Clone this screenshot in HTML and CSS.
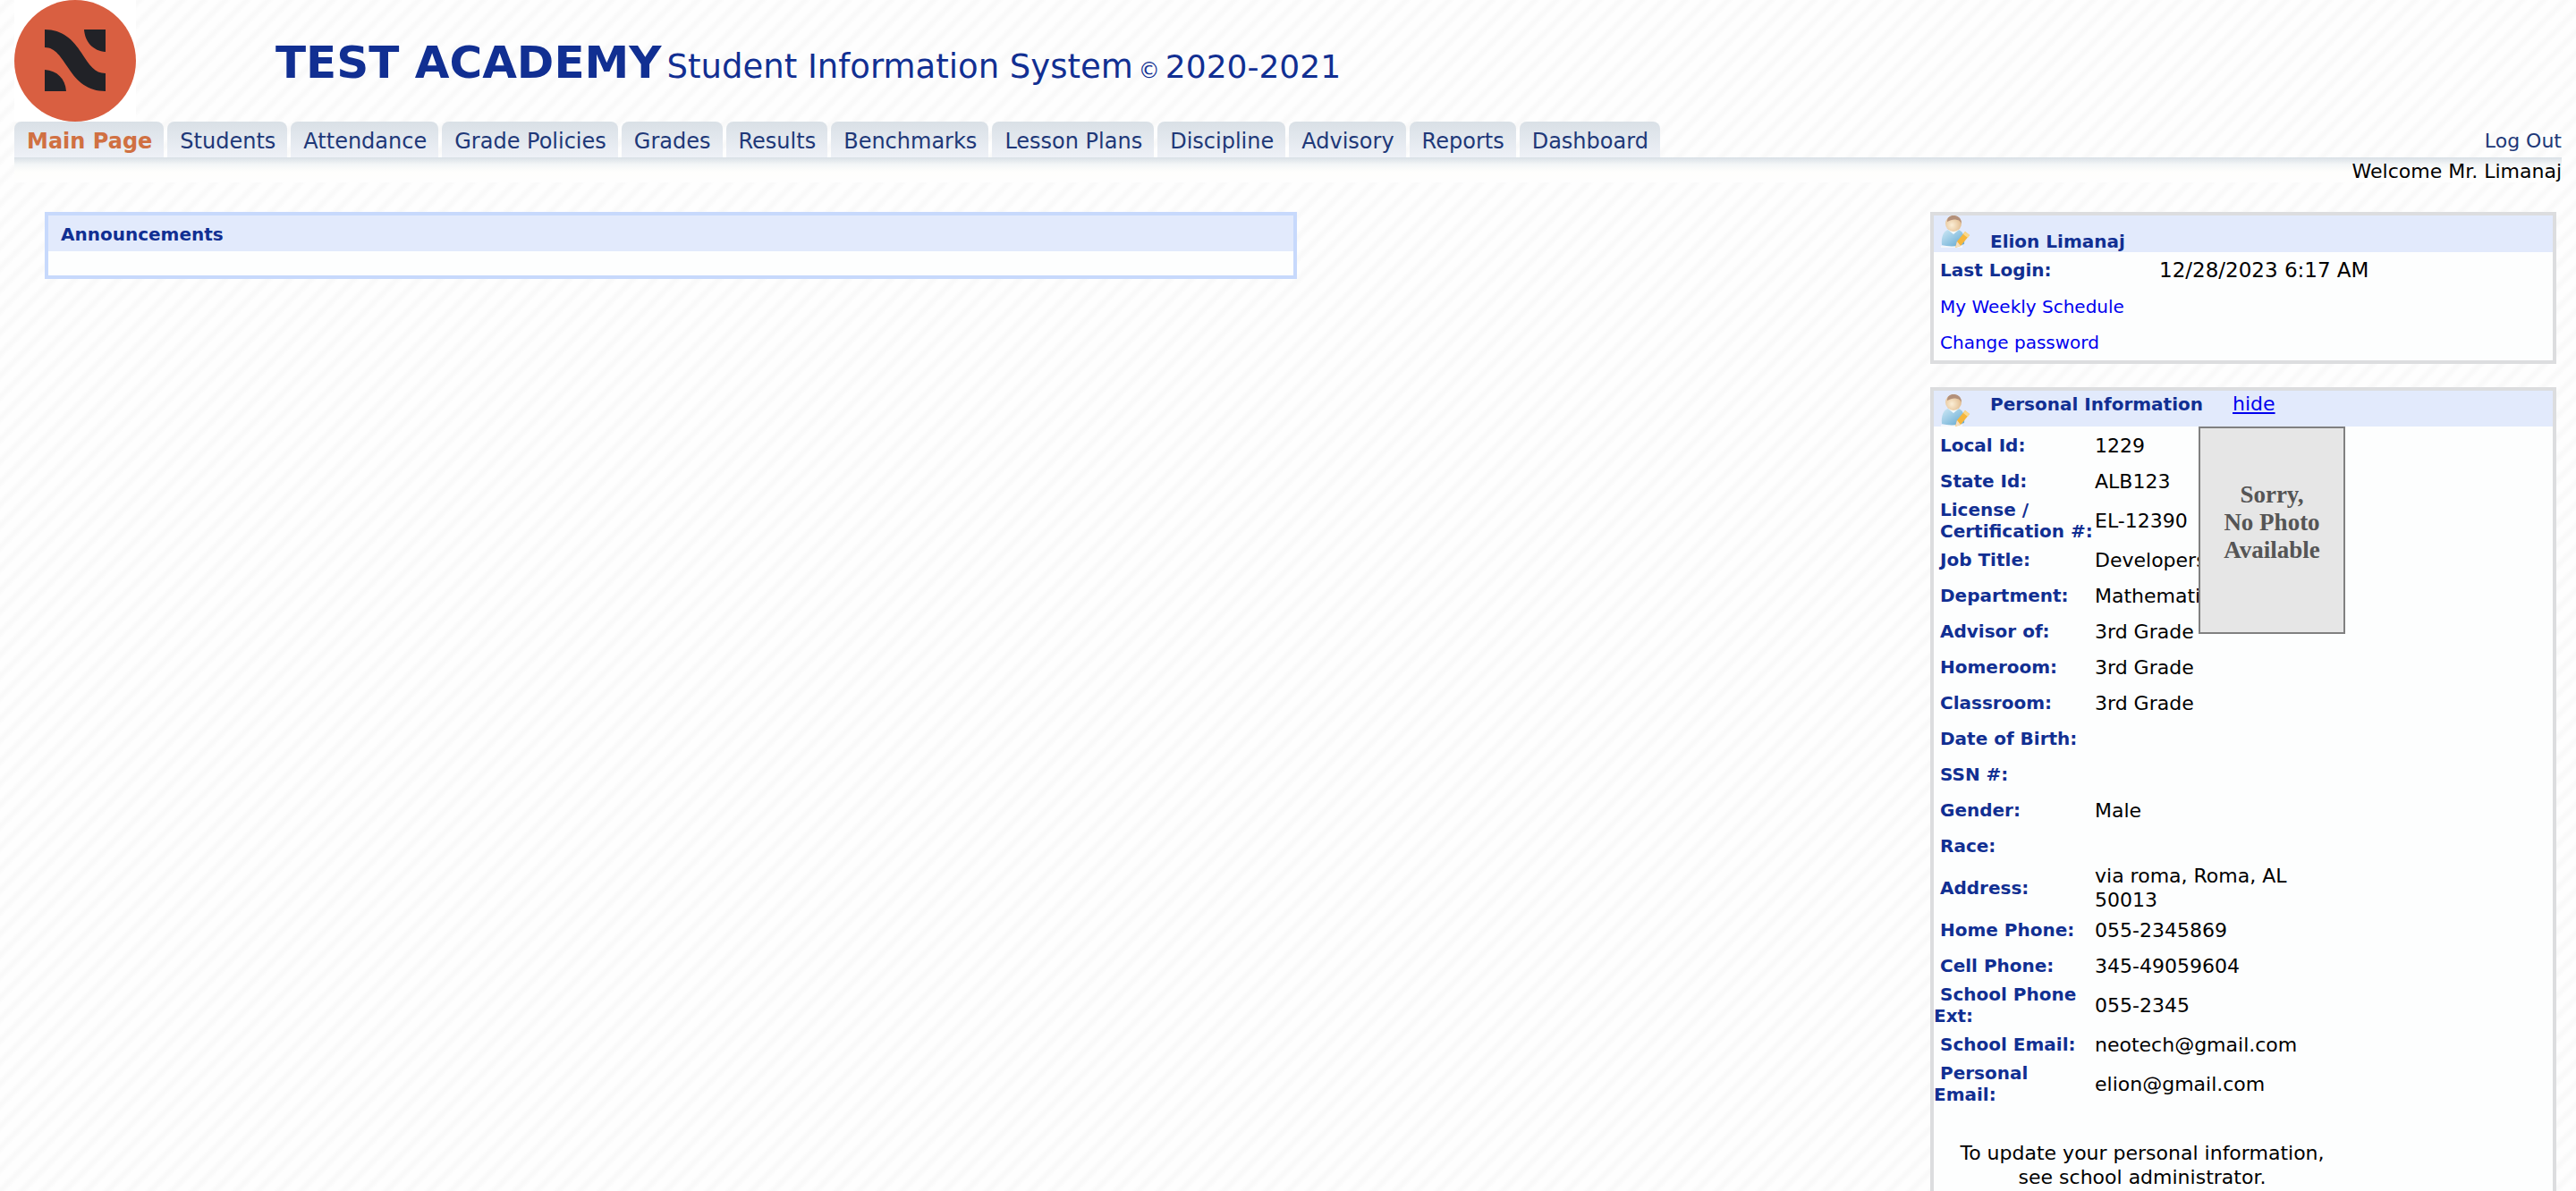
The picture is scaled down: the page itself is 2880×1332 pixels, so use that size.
FILE: index.html
```html
<!DOCTYPE html>
<html lang="en">
<head>
<meta charset="utf-8">
<title>Test Academy Student Information System</title>
<link rel="stylesheet" href="styles.css">
</head>
<body>
<svg class="sprite" aria-hidden="true">
  <defs>
    <linearGradient id="shirt" x1="0" y1="0" x2="1" y2="1">
      <stop offset="0" stop-color="#cfe9f6"/><stop offset="1" stop-color="#5ea6d0"/>
    </linearGradient>
    <radialGradient id="face" cx=".4" cy=".6" r=".6">
      <stop offset="0" stop-color="#fbeed6"/><stop offset="1" stop-color="#e2bd90"/>
    </radialGradient>
  </defs>
  <symbol id="user-edit" viewBox="0 0 32 36">
    <path d="M0 34h24v2H0z" fill="#f4f7fb"/>
    <path d="M1 33C0 24 3 17 8 16h11c5 1 8 6 7 16-7 3-18 3-25 1z" fill="url(#shirt)"/>
    <path d="M8 16l6 5 6-5z" fill="#f3fafd"/>
    <ellipse cx="14" cy="9" rx="9" ry="9" fill="url(#face)"/>
    <path d="M7 7C7 2 10 0 14 0s9 2 9 9c-1-2-3-4-5-4-4-1-7 0-11 2z" fill="#b3907a"/>
    <path d="M27 18l5 4-10 12-6 2 2-7z" fill="#f5b63c"/>
    <path d="M27 18l5 4-2 3-5-4z" fill="#fbd98b"/>
    <path d="M18 29l4 5-6 2z" fill="#f3dfc2"/>
  </symbol>
</svg>

<header class="masthead">
  <svg class="logo" viewBox="0 0 136 136" role="img" aria-label="School logo">
    <rect width="136" height="136" fill="#fff"/>
    <circle cx="68" cy="68" r="68" fill="#d95f41"/>
    <g fill="#212227">
      <path d="M34 33C54 33 66 45 75 59C84 73 90 82 102 82V102C82 102 70 91 61 77C52 64 46 53 34 53Z"/>
      <path d="M78 33H102V58C88 57 79 47 78 33Z"/>
      <path d="M34 78C48 79 57 88 58 102H34Z"/>
    </g>
  </svg>
  <h1 class="title">
    <strong class="school">TEST ACADEMY</strong>
    <span class="system">Student Information System</span>
    <small class="copy">©</small>
    <span>2020-2021</span>
  </h1>
</header>

<nav class="nav">
  <ul class="tabs">
    <li><a class="tab tab-current" href="#">Main Page</a></li>
    <li><a class="tab" href="#">Students</a></li>
    <li><a class="tab" href="#">Attendance</a></li>
    <li><a class="tab" href="#">Grade Policies</a></li>
    <li><a class="tab" href="#">Grades</a></li>
    <li><a class="tab" href="#">Results</a></li>
    <li><a class="tab" href="#">Benchmarks</a></li>
    <li><a class="tab" href="#">Lesson Plans</a></li>
    <li><a class="tab" href="#">Discipline</a></li>
    <li><a class="tab" href="#">Advisory</a></li>
    <li><a class="tab" href="#">Reports</a></li>
    <li><a class="tab" href="#">Dashboard</a></li>
  </ul>
  <a class="logout" href="#">Log Out</a>
</nav>
<p class="welcome">Welcome Mr. Limanaj</p>

<main class="content">
  <section class="announcements">
    <h2 class="panel-title">Announcements</h2>
    <div class="announcements-body"></div>
  </section>

  <aside class="side">
    <section class="panel">
      <div class="panel-head panel-head-low">
        <svg class="user-icon"><use href="#user-edit"/></svg>
        <h2 class="panel-title">Elion Limanaj</h2>
      </div>
      <dl class="login">
        <dt>Last Login:</dt>
        <dd>12/28/2023 6:17 AM</dd>
      </dl>
      <a class="panel-link" href="#">My Weekly Schedule</a>
      <a class="panel-link" href="#">Change password</a>
    </section>

    <section class="panel">
      <div class="panel-head">
        <svg class="user-icon"><use href="#user-edit"/></svg>
        <h2 class="panel-title">Personal Information</h2>
        <a class="hide" href="#">hide</a>
      </div>
      <div class="info">
        <table class="info-table">
          <tbody>
            <tr><th scope="row">Local Id:</th><td>1229</td></tr>
            <tr><th scope="row">State Id:</th><td>ALB123</td></tr>
            <tr><th class="inset" scope="row">License / Certification #:</th><td>EL-12390</td></tr>
            <tr><th scope="row">Job Title:</th><td>Developers</td></tr>
            <tr><th scope="row">Department:</th><td>Mathematics</td></tr>
            <tr><th scope="row">Advisor of:</th><td>3rd Grade</td></tr>
            <tr><th scope="row">Homeroom:</th><td>3rd Grade</td></tr>
            <tr><th scope="row">Classroom:</th><td>3rd Grade</td></tr>
            <tr><th scope="row">Date of Birth:</th><td></td></tr>
            <tr><th scope="row">SSN #:</th><td></td></tr>
            <tr><th scope="row">Gender:</th><td>Male</td></tr>
            <tr><th scope="row">Race:</th><td></td></tr>
            <tr><th scope="row">Address:</th><td>via roma, Roma, AL 50013</td></tr>
            <tr><th scope="row">Home Phone:</th><td>055-2345869</td></tr>
            <tr><th scope="row">Cell Phone:</th><td>345-49059604</td></tr>
            <tr><th scope="row">School Phone Ext:</th><td>055-2345</td></tr>
            <tr><th scope="row">School Email:</th><td>neotech@gmail.com</td></tr>
            <tr><th scope="row">Personal Email:</th><td>elion@gmail.com</td></tr>
          </tbody>
        </table>
        <div class="photo">Sorry,<br>No Photo<br>Available</div>
        <p class="note">To update your personal information,<br>see school administrator.</p>
      </div>
    </section>
  </aside>
</main>
</body>
</html>
```
FILE: styles.css
```css
* {
  box-sizing: border-box;
}

body {
  margin: 0;
  padding: 0 16px;
  font-family: Verdana, "DejaVu Sans", sans-serif;
  font-size: 22px;
  line-height: 27px;
  color: #000;
  background: #fefefe linear-gradient(135deg, #fefefe 10%, #f9f9f9 22% 28%, #fefefe 40% 60%, #f9f9f9 72% 78%, #fefefe 90%);
  background-size: 24px 24px;
}

h1, h2, p, ul, dl, dd {
  margin: 0;
  padding: 0;
}

a {
  color: #0000ee;
  text-decoration: none;
}

.sprite {
  position: absolute;
  width: 0;
  height: 0;
}

.masthead {
  display: flex;
  height: 136px;
}

.logo {
  width: 136px;
  height: 136px;
}

.title {
  display: flex;
  align-items: baseline;
  gap: 6px;
  margin-left: 156px;
  padding-top: 40px;
  font-size: 36px;
  font-weight: 400;
  line-height: 60px;
  color: #112f92;
  white-space: nowrap;
}

.school {
  font-size: 50px;
}

.system {
  font-size: 37px;
}

.copy {
  font-size: 24px;
}

.nav {
  display: flex;
  justify-content: space-between;
  height: 40px;
}

.tabs {
  display: flex;
  gap: 4px;
  list-style: none;
}

.tab {
  display: block;
  height: 40px;
  padding: 0 13px 0 14px;
  border-radius: 8px 8px 0 0;
  font-size: 24px;
  line-height: 44px;
  color: #203878;
  white-space: nowrap;
  background: linear-gradient(#d9e0e6, #eef1f7);
}

.tab-current {
  font-weight: 700;
  color: #d07042;
}

.logout {
  line-height: 44px;
  color: #203878;
}

.welcome {
  height: 28px;
  line-height: 31px;
  text-align: right;
  background: linear-gradient(#d9e0e6, #f3f6f7 8px, #fefefc 16px, #fefefe);
}

.content {
  display: flex;
  justify-content: space-between;
  align-items: flex-start;
  padding: 33px 6px 0 34px;
}

.announcements {
  flex: 0 1 1400px;
  border: 4px solid #c7d9fc;
}

.panel-title {
  font-size: 20px;
  line-height: 24px;
  color: #112f92;
}

.announcements .panel-title {
  padding: 9px 14px 7px;
  background: #e2eafc;
}

.announcements-body {
  height: 27px;
  background: #fdfefe;
}

.side {
  display: flex;
  flex: none;
  flex-direction: column;
  gap: 26px;
  width: 700px;
}

.panel {
  border: 4px solid #dcdddf;
  background: #fdfefe;
}

.panel-head {
  display: flex;
  align-items: flex-start;
  height: 40px;
  padding-left: 8px;
  background: #e2eafc;
}

.panel-head .user-icon {
  align-self: flex-end;
}

.panel-head-low {
  height: 41px;
}

.panel-head-low .user-icon {
  align-self: flex-start;
}

.panel-head .panel-title {
  padding-top: 3px;
}

.panel-head-low .panel-title {
  padding-top: 17px;
}

.user-icon {
  width: 32px;
  height: 36px;
  margin-right: 23px;
}

.hide {
  margin-left: 33px;
  line-height: 30px;
  text-decoration: underline;
}

.login {
  display: flex;
  line-height: 41px;
}

.login dt {
  width: 252px;
  padding-left: 7px;
  font-size: 20px;
  font-weight: 700;
  color: #112f92;
}

.login dd {
  font-size: 23px;
}

.panel-link {
  display: block;
  padding-left: 7px;
  font-size: 20px;
  line-height: 40px;
}

.info {
  position: relative;
  width: 466px;
  padding-top: 1px;
}

.info-table {
  width: 100%;
  border-collapse: collapse;
  table-layout: fixed;
}

.info-table tr {
  height: 40px;
}

.info-table th,
.info-table td {
  padding: 0;
  text-align: left;
  vertical-align: middle;
}

.info-table th {
  width: 180px;
  font-size: 20px;
  line-height: 24px;
  text-indent: 7px;
  color: #112f92;
}

.info-table .inset {
  padding-left: 7px;
  text-indent: 0;
}

.photo {
  position: absolute;
  top: 0;
  left: 296px;
  width: 164px;
  height: 232px;
  padding-top: 59px;
  border: 2px solid #808080;
  font-family: "Liberation Serif", serif;
  font-size: 27px;
  font-weight: 700;
  line-height: 31px;
  text-align: center;
  color: #555;
  background: #e6e6e6;
}

.note {
  padding: 40px 0;
  text-align: center;
}
```
